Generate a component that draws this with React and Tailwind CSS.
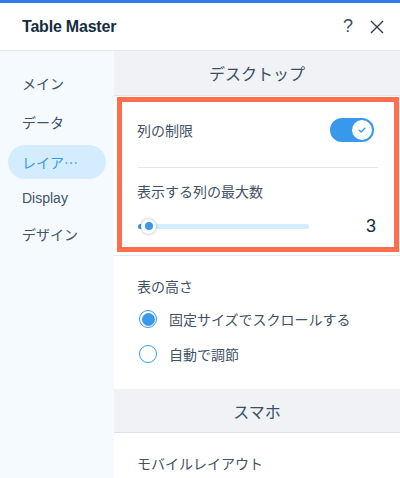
import React from "react";

const jp = { fontFamily: '"Noto Sans CJK JP", "Noto Sans", sans-serif' };

export default function App() {
  return (
    <div className="w-[400px] h-[478px] overflow-hidden bg-white flex flex-col" style={jp}>
      <div className="h-[3px] bg-[#2f7bf0] shrink-0" />
      <div className="h-[48px] shrink-0 flex items-center pl-[22px] pr-[14px] border-b border-[#e3e6ea]">
        <div className="text-[16px] font-bold text-[#162d3d] tracking-[-0.2px]" style={{ fontFamily: '"Liberation Sans", Arial, sans-serif' }}>
          Table Master
        </div>
        <div className="ml-auto flex items-center gap-[17px]">
          <span className="text-[18px] text-[#3a4a5a] font-light" style={{ fontFamily: '"Liberation Sans", Arial, sans-serif' }}>?</span>
          <svg width="14" height="14" viewBox="0 0 14 14" className="mr-[2px]">
            <path d="M1 1 L13 13 M13 1 L1 13" stroke="#2d3d4d" strokeWidth="1.4" fill="none" />
          </svg>
        </div>
      </div>
      <div className="flex flex-1 min-h-0">
        <div className="w-[114px] shrink-0 bg-[#f5faff] flex flex-col text-[14px] text-[#3f5266]">
          <div className="h-[36px] mt-[14px] flex items-center pl-[22px]">メイン</div>
          <div className="h-[36px] mt-[3px] flex items-center pl-[22px]">データ</div>
          <div className="h-[34px] mt-[5px] mx-[8px] rounded-full bg-[#d3edff] flex items-center pl-[14px] text-[#3899ec]">レイア…</div>
          <div className="h-[36px] mt-[1px] flex items-center pl-[22px]" style={{ fontFamily: '"Liberation Sans", Arial, sans-serif' }}>Display</div>
          <div className="h-[36px] flex items-center pl-[22px]">デザイン</div>
        </div>
        <div className="flex-1 flex flex-col min-w-0">
          <div className="h-[45px] shrink-0 bg-[#f0f2f5] border-b border-[#dfe3e8] flex items-center justify-center text-[16px] text-[#3b5064]">
            デスクトップ
          </div>
          <div className="mt-[1px] ml-[3px] mr-[1px] border-[5px] border-[#ff6f4f] bg-white">
            <div className="pl-[15px] pr-[16px]">
              <div className="flex items-center pt-[16px] pb-[25px]">
                <span className="text-[14px] text-[#3f5266]">列の制限</span>
                <div className="ml-auto mr-[4px] w-[44px] h-[24px] rounded-full bg-[#3899ec] flex items-center justify-end pr-[2px]">
                  <div className="w-[20px] h-[20px] rounded-full bg-white flex items-center justify-center">
                    <svg width="10" height="10" viewBox="0 0 10 10">
                      <path d="M2.2 5.2 L4.2 7 L7.8 3.2" stroke="#3899ec" strokeWidth="1.4" fill="none" strokeLinecap="round" strokeLinejoin="round" />
                    </svg>
                  </div>
                </div>
              </div>
              <div className="h-px bg-[#e1e6eb] ml-px" />
              <div className="mt-[13px] h-[20px] flex items-center text-[14px] text-[#3f5266]">表示する列の最大数</div>
              <div className="mt-[15px] h-[20px] flex items-center pb-0">
                <div className="relative w-[171px] h-[5px] rounded-full bg-[#d3edff] ml-px">
                  <div className="absolute left-0 top-0 h-[5px] w-[11px] rounded-l-full bg-[#3899ec]" />
                  <div className="absolute left-[3px] top-[-5px] w-[15px] h-[15px] rounded-full bg-white shadow-[0_0_3px_rgba(0,0,0,0.35)] flex items-center justify-center">
                    <div className="w-[8px] h-[8px] rounded-full bg-[#3899ec]" />
                  </div>
                </div>
                <span className="ml-auto mr-[2px] text-[18px] text-[#162d3d]" style={{ fontFamily: '"Liberation Sans", Arial, sans-serif' }}>3</span>
              </div>
              <div className="h-[11px]" />
            </div>
          </div>
          <div className="mt-[3px] h-px bg-[#e6eaee]" />
          <div className="pl-[23px] pt-[20px] text-[14px] text-[#3f5266]">
            <div className="h-[20px] flex items-center">表の高さ</div>
            <div className="mt-[13px] h-[20px] flex items-center">
              <div className="w-[18px] h-[18px] rounded-full border-[1.5px] border-[#3899ec] p-[1.5px] ml-[2px]">
                <div className="w-full h-full rounded-full bg-[#3899ec]" />
              </div>
              <span className="ml-[12px]">固定サイズでスクロールする</span>
            </div>
            <div className="mt-[15px] h-[20px] flex items-center">
              <div className="w-[18px] h-[18px] rounded-full border-[1.5px] border-[#3899ec] ml-[2px]" />
              <span className="ml-[12px]">自動で調節</span>
            </div>
          </div>
          <div className="mt-[25px] h-[44px] shrink-0 bg-[#f0f2f5] border-b border-[#dfe3e8] flex items-center justify-center text-[16px] text-[#3b5064]">
            スマホ
          </div>
          <div className="pl-[23px] mt-[20px] h-[20px] flex items-center text-[14px] text-[#3f5266]">モバイルレイアウト</div>
        </div>
      </div>
    </div>
  );
}
